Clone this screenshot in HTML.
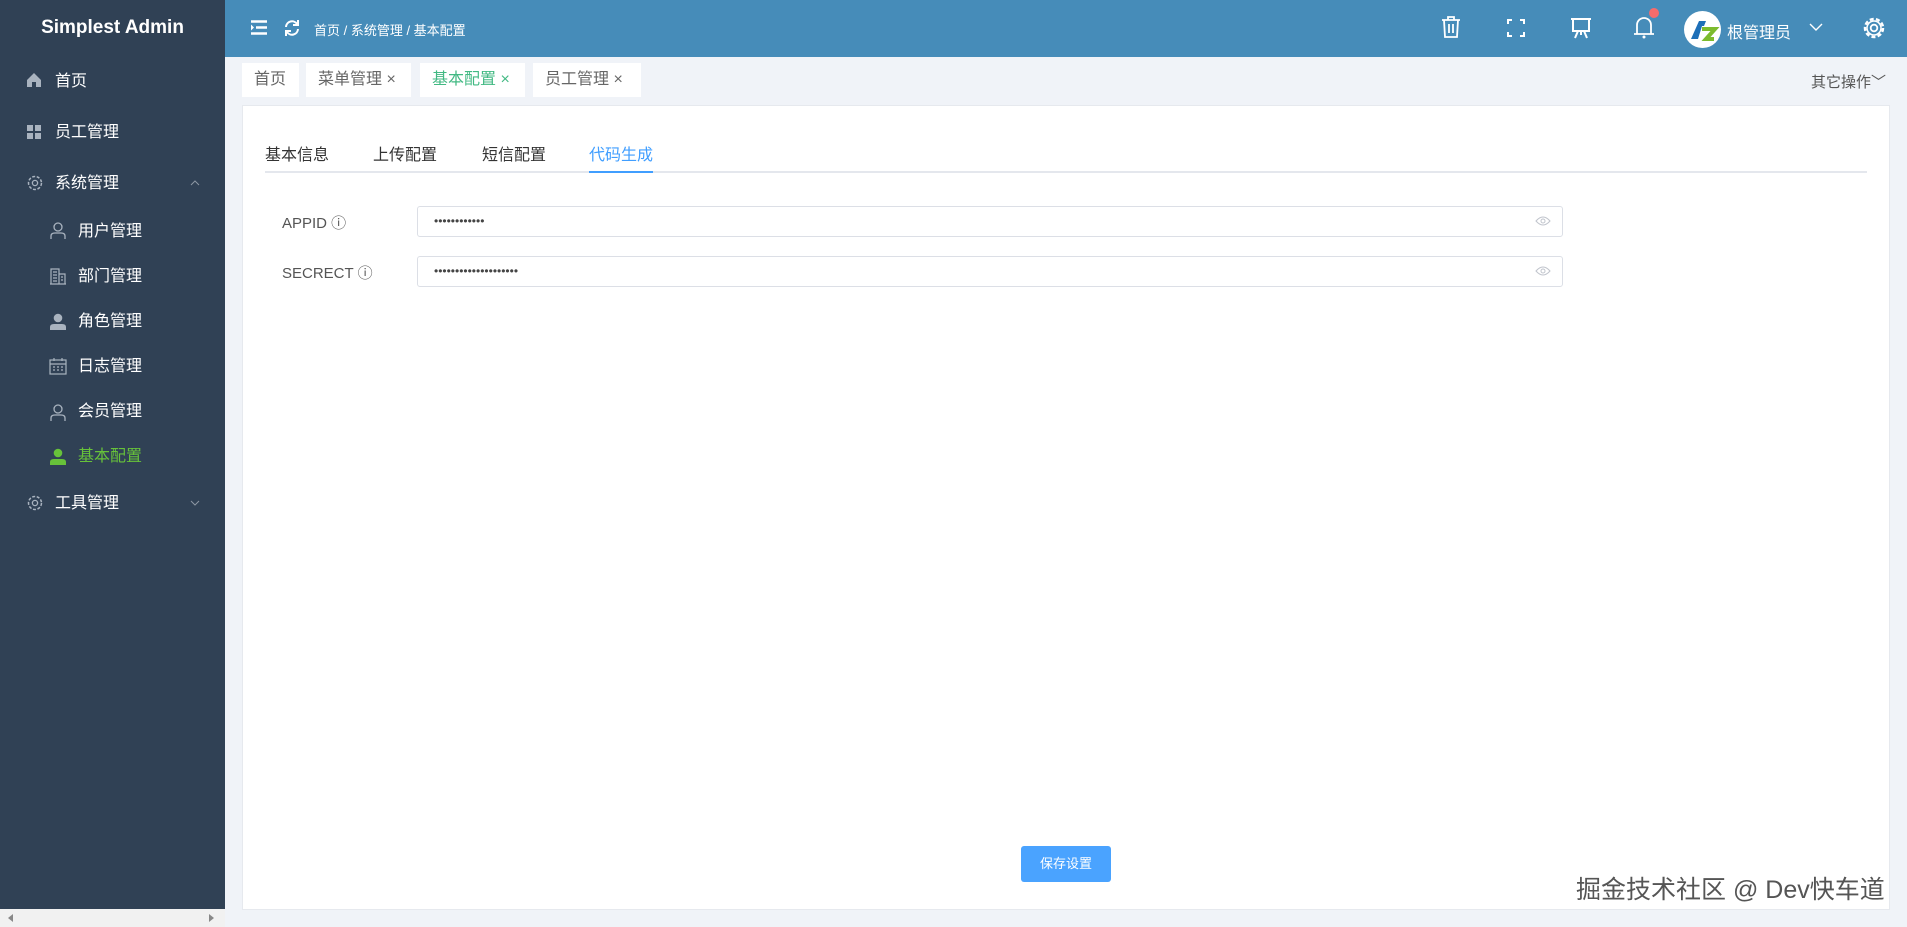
<!DOCTYPE html>
<html><head><meta charset="utf-8"><style>
*{margin:0;padding:0;box-sizing:border-box}
body{width:1907px;height:927px;overflow:hidden;background:#f0f3f8;font-family:"Liberation Sans","Noto Sans CJK SC",sans-serif;position:relative}
.side{position:absolute;left:0;top:0;width:225px;height:927px;background:#304155}
.title{position:absolute;left:0;width:225px;top:17px;text-align:center;color:#fff;font-weight:bold;font-size:19px}
.mi{position:absolute;color:#fff;font-size:16px;line-height:20px}
.ic{position:absolute}
.top{position:absolute;left:225px;top:0;width:1682px;height:57px;background:#468cb9}
.tab{position:absolute;top:63px;height:34px;background:#fff;color:#666;font-size:16px;line-height:34px;padding:0 12px}
.card{position:absolute;left:242px;top:105px;width:1648px;height:805px;background:#fff;border:1px solid #e6e9ee}
.it{position:absolute;top:141px;font-size:16px;color:#333}
.lbl{position:absolute;left:282px;font-size:15px;color:#555}
.inp{position:absolute;left:417px;width:1146px;height:31px;border:1px solid #dcdfe6;border-radius:3px;font-size:12px;color:#444;padding-left:16px;line-height:29px;letter-spacing:0}
</style></head><body>
<div class="side">
<div class="title">Simplest Admin</div>
<svg class="ic" style="left:26px;top:72px" width="16" height="16" viewBox="0 0 16 16"><path d="M1 8L8 1L15 8V15H10V10H6V15H1Z" fill="#a9b3bf"/></svg>
<div class="mi" style="left:55px;top:72px">首页</div>
<svg class="ic" style="left:27px;top:125px" width="14" height="14"><rect x="0" y="0" width="6" height="6" fill="#a9b3bf"/><rect x="8" y="0" width="6" height="6" fill="#a9b3bf"/><rect x="0" y="8" width="6" height="6" fill="#a9b3bf"/><rect x="8" y="8" width="6" height="6" fill="#a9b3bf"/></svg>
<div class="mi" style="left:55px;top:123px">员工管理</div>
<svg class="ic" style="left:26px;top:174px" width="18" height="18" viewBox="0 0 18 18"><circle cx="9" cy="9" r="6.5" fill="none" stroke="#a9b3bf" stroke-width="1.5" stroke-dasharray="3 1.6"/><circle cx="9" cy="9" r="2.6" fill="none" stroke="#a9b3bf" stroke-width="1.3"/></svg>
<div class="mi" style="left:55px;top:174px">系统管理</div>
<svg class="ic" style="left:190px;top:180px" width="10" height="6"><path d="M1 5L5 1L9 5" stroke="#8d97a3" fill="none"/></svg>
<svg class="ic" style="left:50px;top:222px" width="16" height="18"><circle cx="8" cy="5" r="4" fill="none" stroke="#a9b3bf" stroke-width="1.3"/><path d="M1 17V14Q1 11 5 11H11Q15 11 15 14V17" fill="none" stroke="#a9b3bf" stroke-width="1.3"/></svg>
<div class="mi" style="left:78px;top:222px">用户管理</div>
<svg class="ic" style="left:50px;top:268px" width="16" height="17"><path d="M1 16V1H9V16M9 6H15V16M0 16H16M3 4H7M3 7H7M3 10H7M3 13H7M11 9H13M11 12H13" fill="none" stroke="#a9b3bf" stroke-width="1.2"/></svg>
<div class="mi" style="left:78px;top:267px">部门管理</div>
<svg class="ic" style="left:50px;top:313px" width="16" height="17"><circle cx="8" cy="5" r="4.3" fill="#a9b3bf"/><path d="M0 17V14Q0 11 4 11H12Q16 11 16 14V17Z" fill="#a9b3bf"/></svg>
<div class="mi" style="left:78px;top:312px">角色管理</div>
<svg class="ic" style="left:49px;top:358px" width="18" height="17"><rect x="1" y="2" width="16" height="14" fill="none" stroke="#a9b3bf" stroke-width="1.2"/><path d="M1 6H17M5 0V3M13 0V3M4 9H6M8 9H10M12 9H14M4 12H6M8 12H10M12 12H14" stroke="#a9b3bf" stroke-width="1.2"/></svg>
<div class="mi" style="left:78px;top:357px">日志管理</div>
<svg class="ic" style="left:50px;top:404px" width="16" height="18"><circle cx="8" cy="5" r="4" fill="none" stroke="#a9b3bf" stroke-width="1.3"/><path d="M1 17V14Q1 11 5 11H11Q15 11 15 14V17" fill="none" stroke="#a9b3bf" stroke-width="1.3"/></svg>
<div class="mi" style="left:78px;top:402px">会员管理</div>
<svg class="ic" style="left:50px;top:448px" width="16" height="17"><circle cx="8" cy="5" r="4.3" fill="#67c23a"/><path d="M0 17V14Q0 11 4 11H12Q16 11 16 14V17Z" fill="#67c23a"/></svg>
<div class="mi" style="left:78px;top:447px;color:#67c23a">基本配置</div>
<svg class="ic" style="left:26px;top:494px" width="18" height="18" viewBox="0 0 18 18"><circle cx="9" cy="9" r="6.5" fill="none" stroke="#a9b3bf" stroke-width="1.5" stroke-dasharray="3 1.6"/><circle cx="9" cy="9" r="2.6" fill="none" stroke="#a9b3bf" stroke-width="1.3"/></svg>
<div class="mi" style="left:55px;top:494px">工具管理</div>
<svg class="ic" style="left:190px;top:500px" width="10" height="6"><path d="M1 1L5 5L9 1" stroke="#8d97a3" fill="none"/></svg>
<div style="position:absolute;left:0;top:909px;width:225px;height:18px;background:#f1f1f1"></div>
<div style="position:absolute;left:8px;top:914px;width:0;height:0;border:4px solid transparent;border-right:5px solid #888;border-left:0"></div>
<div style="position:absolute;left:209px;top:914px;width:0;height:0;border:4px solid transparent;border-left:5px solid #888;border-right:0"></div>
</div>
<div class="top">
<svg class="ic" style="left:26px;top:20px" width="16" height="15"><path d="M0 1.5H16M5 7.5H16M0 13.5H16" stroke="#fff" stroke-width="2.6"/><path d="M0 4.5L3 7.5L0 10.5Z" fill="#fff"/></svg>
<svg class="ic" style="left:58px;top:19px" width="18" height="18" viewBox="0 0 18 18"><path d="M3 8A6 6 0 0 1 14 5M15 10A6 6 0 0 1 4 13" fill="none" stroke="#fff" stroke-width="2"/><path d="M15 1V6H10" fill="none" stroke="#fff" stroke-width="2"/><path d="M3 17V12H8" fill="none" stroke="#fff" stroke-width="2"/></svg>
<div style="position:absolute;left:89px;top:20px;color:#fff;font-size:13px">首页 / 系统管理 / 基本配置</div>
<svg class="ic" style="left:1216px;top:16px" width="20" height="22"><path d="M1 4H19M7 4V1H13V4M3 4L4 21H16L17 4M8 8V17M12 8V17" fill="none" stroke="#fff" stroke-width="1.8"/></svg>
<svg class="ic" style="left:1282px;top:19px" width="18" height="18"><path d="M1 5V1H5M13 1H17V5M17 13V17H13M5 17H1V13" fill="none" stroke="#fff" stroke-width="2"/></svg>
<svg class="ic" style="left:1345px;top:17px" width="22" height="22"><path d="M1 2H21M3 2V14H19V2M8 14L5 21M14 14L17 21M11 14V18" fill="none" stroke="#fff" stroke-width="2"/></svg>
<svg class="ic" style="left:1408px;top:14px" width="22" height="26"><path d="M4 20V11A7 7 0 0 1 18 11V20M1 20H21" fill="none" stroke="#fff" stroke-width="1.8"/><circle cx="11" cy="23" r="1.5" fill="#fff"/></svg>
<div style="position:absolute;left:1424px;top:8px;width:10px;height:10px;border-radius:50%;background:#f56c6c"></div>
<div style="position:absolute;left:1459px;top:11px;width:37px;height:37px;border-radius:50%;background:#fff;overflow:hidden"><svg width="37" height="37"><path d="M7 28L15 10H22L20 15H18L14 28Z" fill="#1d6fb8"/><path d="M18 18H31L22 28H30" fill="none" stroke="#7cbb2e" stroke-width="4"/></svg></div>
<div style="position:absolute;left:1502px;top:19px;color:#fff;font-size:16px">根管理员</div>
<svg class="ic" style="left:1584px;top:23px" width="14" height="8"><path d="M1 1L7 7L13 1" stroke="#fff" stroke-width="1.4" fill="none"/></svg>
<svg class="ic" style="left:1637px;top:16px" width="24" height="24" viewBox="0 0 24 24"><circle cx="12" cy="12" r="9" fill="none" stroke="#fff" stroke-width="2.5" stroke-dasharray="4 2.3"/><circle cx="12" cy="12" r="7" fill="none" stroke="#fff" stroke-width="1.5"/><circle cx="12" cy="12" r="3.3" fill="none" stroke="#fff" stroke-width="1.8"/></svg>
</div>
<div class="tab" style="left:242px;width:57px">首页</div>
<div class="tab" style="left:306px;width:105px">菜单管理 ×</div>
<div class="tab" style="left:420px;width:105px;color:#42b983">基本配置 ×</div>
<div class="tab" style="left:533px;width:108px">员工管理 ×</div>
<div style="position:absolute;left:1811px;top:71px;font-size:15px;color:#555">其它操作﹀</div>
<div class="card"></div>
<div class="it" style="left:265px">基本信息</div>
<div class="it" style="left:373px">上传配置</div>
<div class="it" style="left:482px">短信配置</div>
<div class="it" style="left:589px;color:#409eff">代码生成</div>
<div style="position:absolute;left:265px;top:171px;width:1602px;height:2px;background:#e4e7ed"></div>
<div style="position:absolute;left:589px;top:171px;width:64px;height:2px;background:#409eff"></div>
<div class="lbl" style="top:212px">APPID ⓘ</div>
<div class="inp" style="top:206px">••••••••••••</div>
<div class="lbl" style="top:262px">SECRECT ⓘ</div>
<div class="inp" style="top:256px">••••••••••••••••••••</div>
<svg class="ic" style="left:1535px;top:216px" width="16" height="10"><path d="M1 5Q8 -3 15 5Q8 13 1 5Z" fill="none" stroke="#c0c4cc"/><circle cx="8" cy="5" r="2" fill="none" stroke="#c0c4cc"/></svg>
<svg class="ic" style="left:1535px;top:266px" width="16" height="10"><path d="M1 5Q8 -3 15 5Q8 13 1 5Z" fill="none" stroke="#c0c4cc"/><circle cx="8" cy="5" r="2" fill="none" stroke="#c0c4cc"/></svg>
<div style="position:absolute;left:1021px;top:846px;width:90px;height:36px;background:#4aa3ff;border-radius:3px;color:#fff;font-size:13px;text-align:center;line-height:36px">保存设置</div>
<div style="position:absolute;left:1576px;top:870px;font-size:25px;color:#555;text-shadow:1px 1px 0 #fff,-1px -1px 0 #fff">掘金技术社区 @ Dev快车道</div>
</body></html>
